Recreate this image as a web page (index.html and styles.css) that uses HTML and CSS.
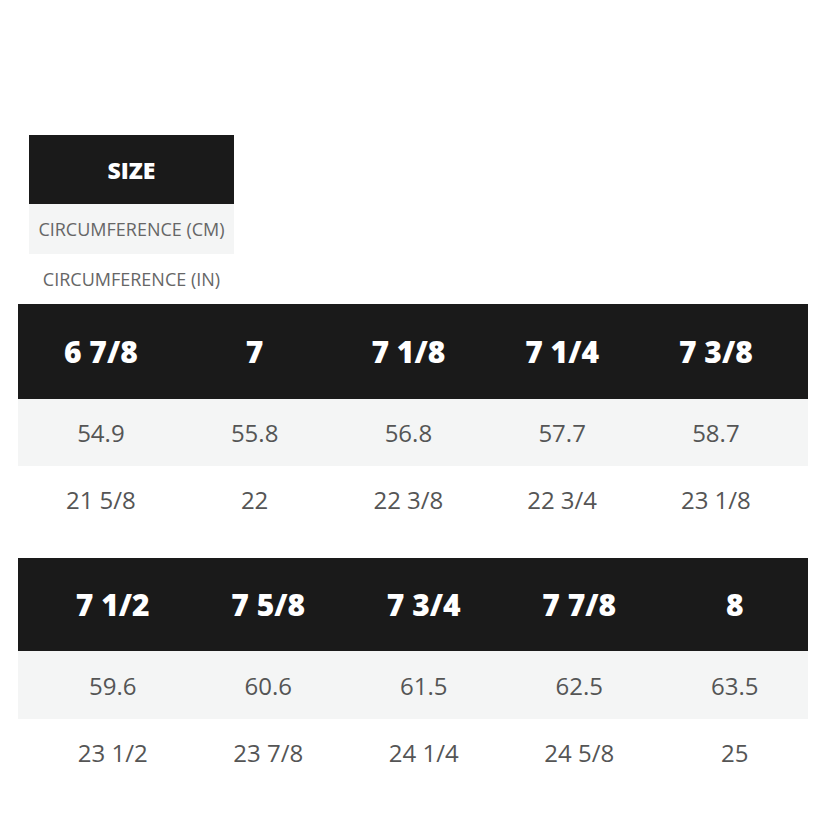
FILE: index.html
```html
<!DOCTYPE html>
<html>
<head>
<meta charset="utf-8">
<link rel="stylesheet" href="styles.css">
</head>
<body>
<div class="page">
  <div class="key">
    <div class="key-head">SIZE</div>
    <div class="key-row key-grey">CIRCUMFERENCE (CM)</div>
    <div class="key-row">CIRCUMFERENCE (IN)</div>
  </div>

  <div class="chart chart-a">
    <div class="row head"><div>6 7/8</div><div>7</div><div>7 1/8</div><div>7 1/4</div><div>7 3/8</div></div>
    <div class="row grey"><div>54.9</div><div>55.8</div><div>56.8</div><div>57.7</div><div>58.7</div></div>
    <div class="row"><div>21 5/8</div><div>22</div><div>22 3/8</div><div>22 3/4</div><div>23 1/8</div></div>
  </div>

  <div class="chart chart-b">
    <div class="row head"><div>7 1/2</div><div>7 5/8</div><div>7 3/4</div><div>7 7/8</div><div>8</div></div>
    <div class="row grey"><div>59.6</div><div>60.6</div><div>61.5</div><div>62.5</div><div>63.5</div></div>
    <div class="row"><div>23 1/2</div><div>23 7/8</div><div>24 1/4</div><div>24 5/8</div><div>25</div></div>
  </div>
</div>
</body>
</html>
```

FILE: styles.css
```css
html, body {
  margin: 0;
  padding: 0;
  background: #ffffff;
}

body {
  font-family: "Open Sans", "Liberation Sans", sans-serif;
}

.page {
  width: 790px;
  padding: 135px 0 0 18px;
}

.key {
  width: 205px;
  margin-left: 11px;
  display: flex;
  flex-direction: column;
}

.key-head {
  height: 69px;
  background: #1a1a1a;
  color: #ffffff;
  font-weight: 800;
  font-size: 23px;
  display: flex;
  align-items: center;
  justify-content: center;
}

.key-row {
  height: 50px;
  display: flex;
  align-items: center;
  justify-content: center;
  font-size: 18px;
  color: #666666;
}

.key-grey {
  background: #f4f5f5;
}

.chart {
  width: 790px;
  display: flex;
  flex-direction: column;
}

.chart-b {
  margin-top: 25px;
}

.row {
  display: grid;
  height: 67px;
  align-items: center;
  text-align: center;
  font-size: 24px;
  color: #555555;
}

.chart-a .row {
  grid-template-columns: repeat(5, 153.75px);
  padding-left: 6px;
}

.chart-b .row {
  grid-template-columns: repeat(5, 155.5px);
  padding-left: 17px;
}

.chart-a .row.head {
  height: 95px;
}

.row.head {
  height: 93px;
  background: #1a1a1a;
  color: #ffffff;
  font-weight: 800;
  font-size: 30px;
}

.chart-b .row.grey {
  height: 68px;
}

.row.grey {
  background: #f4f5f5;
}
```
